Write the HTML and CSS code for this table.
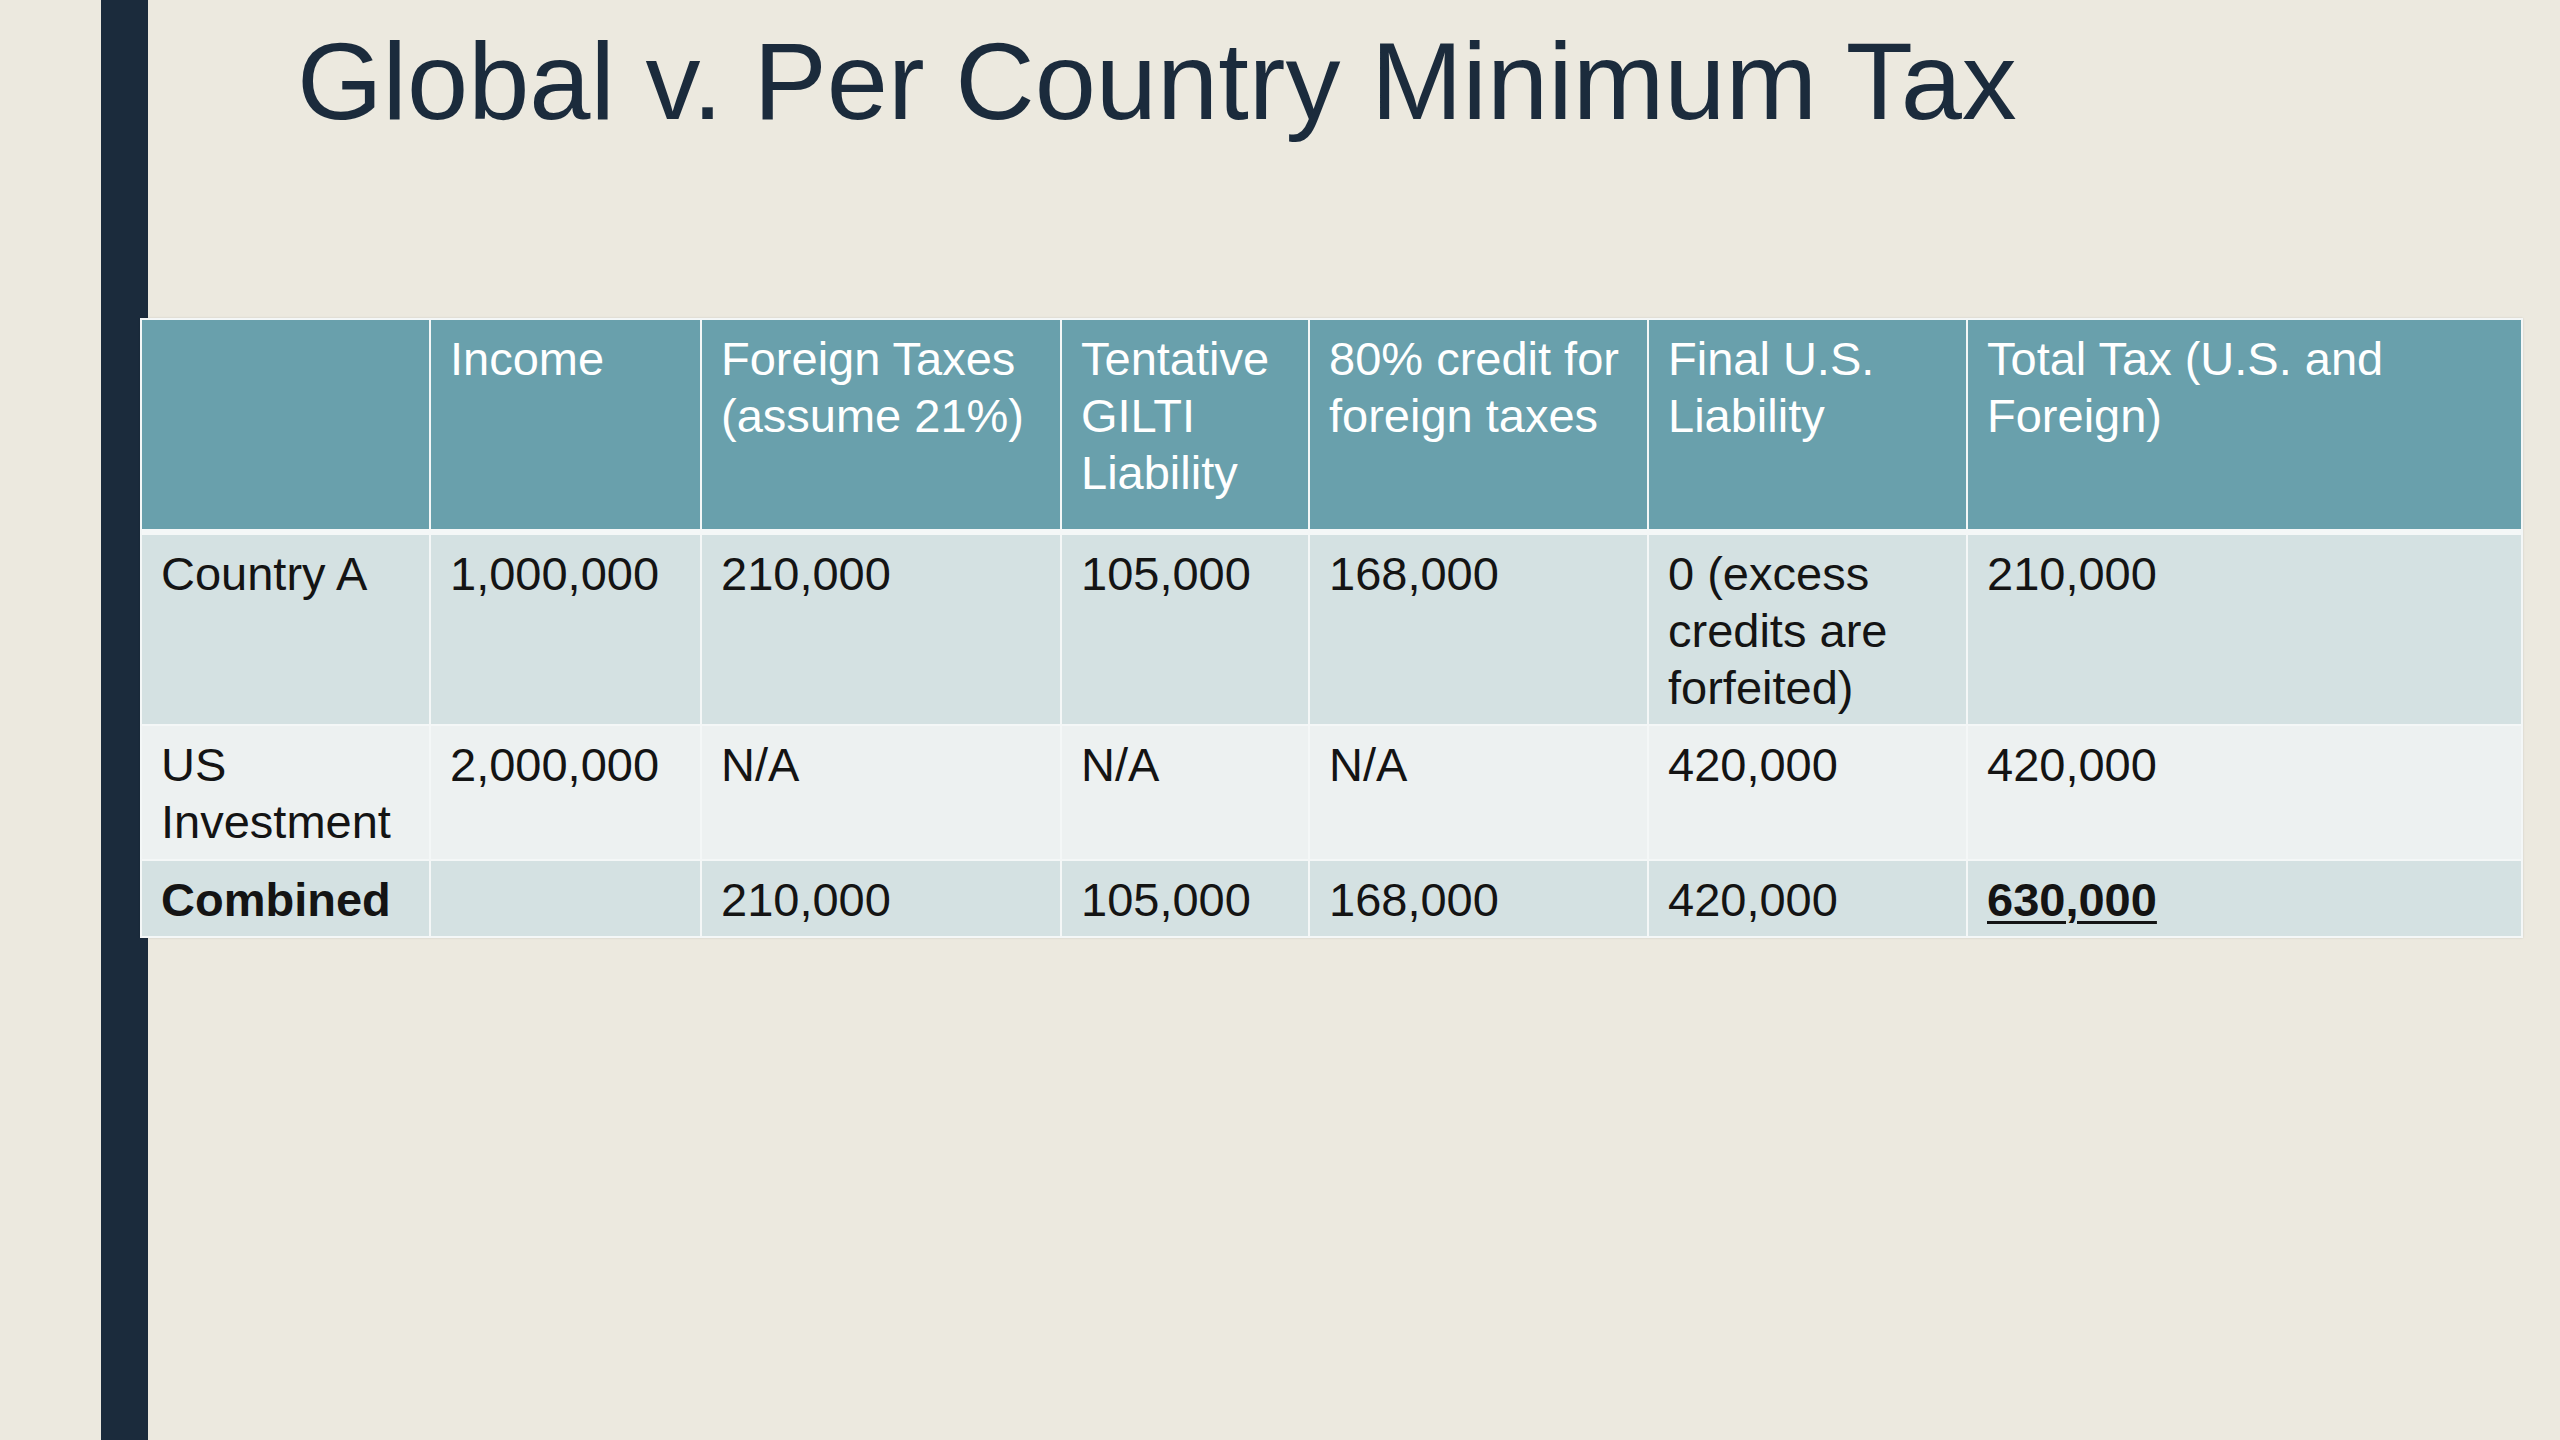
FILE: index.html
```html
<!DOCTYPE html>
<html lang="en">
<head>
<meta charset="utf-8">
<title>Global v. Per Country Minimum Tax</title>
<link rel="stylesheet" href="styles.css">
</head>
<body>
<div class="slide">
  <div class="rail"></div>
  <main class="content">
    <h1 class="title">Global v. Per Country Minimum Tax</h1>
    <table class="tax-table">
      <colgroup>
        <col class="c1"><col class="c2"><col class="c3"><col class="c4"><col class="c5"><col class="c6"><col class="c7">
      </colgroup>
      <thead>
        <tr class="head-row">
          <th></th>
          <th>Income</th>
          <th>Foreign Taxes (assume 21%)</th>
          <th>Tentative GILTI Liability</th>
          <th>80% credit for foreign taxes</th>
          <th>Final U.S. Liability</th>
          <th>Total Tax (U.S. and Foreign)</th>
        </tr>
      </thead>
      <tbody>
        <tr class="row-a">
          <td>Country A</td>
          <td>1,000,000</td>
          <td>210,000</td>
          <td>105,000</td>
          <td>168,000</td>
          <td>0 (excess credits are forfeited)</td>
          <td>210,000</td>
        </tr>
        <tr class="row-b">
          <td>US Investment</td>
          <td>2,000,000</td>
          <td>N/A</td>
          <td>N/A</td>
          <td>N/A</td>
          <td>420,000</td>
          <td>420,000</td>
        </tr>
        <tr class="row-c">
          <td class="strong">Combined</td>
          <td></td>
          <td>210,000</td>
          <td>105,000</td>
          <td>168,000</td>
          <td>420,000</td>
          <td class="total">630,000</td>
        </tr>
      </tbody>
    </table>
  </main>
</div>
</body>
</html>
```
FILE: styles.css
```css
html, body {
  margin: 0;
  padding: 0;
  background: #ece9df;
}

.slide {
  display: flex;
  width: 2560px;
  height: 1440px;
  overflow: hidden;
  background: #ece9df;
  font-family: "Liberation Sans", Arial, sans-serif;
}

.rail {
  flex: 0 0 47px;
  margin-left: 101px;
  background: #1b2b3c;
}

.content {
  flex: 1;
  margin-left: -8px;
  position: relative;
  z-index: 1;
  display: flex;
  flex-direction: column;
}

.title {
  margin: 26px 0 0 0;
  padding-left: 157px;
  font-size: 110px;
  line-height: 110px;
  font-weight: normal;
  color: #1b2b3c;
  letter-spacing: 0;
}

.tax-table {
  margin-top: 182px;
  width: 2381px;
  border-collapse: collapse;
  table-layout: fixed;
  font-size: 47px;
  line-height: 57px;
  color: #141414;
  box-shadow: 0 0 2px rgba(0,0,0,0.12);
}

.c1 { width: 289px; }
.c2 { width: 271px; }
.c3 { width: 360px; }
.c4 { width: 248px; }
.c5 { width: 339px; }
.c6 { width: 319px; }
.c7 { width: 555px; }

.tax-table th,
.tax-table td {
  text-align: left;
  vertical-align: top;
  padding: 10px 20px 4px 19px;
  border: 2px solid #f4f7f7;
}

.tax-table th {
  font-weight: normal;
  color: #ffffff;
  background: #69a0ac;
  border-bottom: 6px solid #f4f7f7;
}

.head-row { height: 213px; }
.row-a { height: 193px; }
.row-b { height: 135px; }
.row-c { height: 77px; }

.row-a td, .row-c td { background: #d4e1e2; }
.row-b td { background: #edf1f1; }

.strong { font-weight: bold; }

.total {
  font-weight: bold;
  text-decoration: underline;
  text-underline-offset: 5px;
  text-decoration-thickness: 3px;
}
```
